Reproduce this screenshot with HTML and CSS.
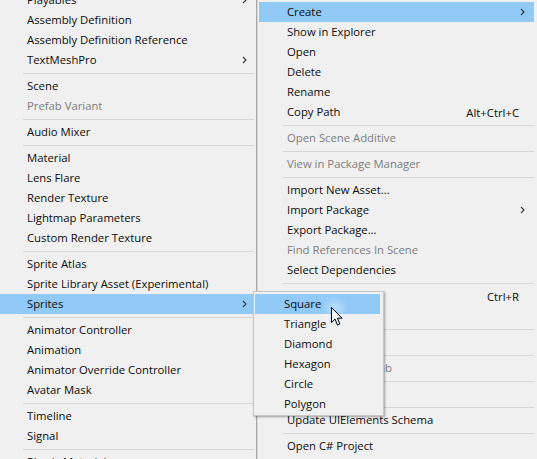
FILE: index.html
```html
<!DOCTYPE html>
<html>
<head>
<meta charset="utf-8">
<link rel="stylesheet" href="styles.css">
</head>
<body>
<div class="desk">
  <div class="menu menu-left">
    <div class="item"><span class="label">Playables</span><svg class="chev" viewBox="0 0 5 8"><polyline points="1,1 4,4 1,7"/></svg></div>
    <div class="item"><span class="label">Assembly Definition</span></div>
    <div class="item"><span class="label">Assembly Definition Reference</span></div>
    <div class="item"><span class="label">TextMeshPro</span><svg class="chev" viewBox="0 0 5 8"><polyline points="1,1 4,4 1,7"/></svg></div>
    <div class="sep"></div>
    <div class="item"><span class="label">Scene</span></div>
    <div class="item disabled"><span class="label">Prefab Variant</span></div>
    <div class="sep"></div>
    <div class="item"><span class="label">Audio Mixer</span></div>
    <div class="sep"></div>
    <div class="item"><span class="label">Material</span></div>
    <div class="item"><span class="label">Lens Flare</span></div>
    <div class="item"><span class="label">Render Texture</span></div>
    <div class="item"><span class="label">Lightmap Parameters</span></div>
    <div class="item"><span class="label">Custom Render Texture</span></div>
    <div class="sep"></div>
    <div class="item"><span class="label">Sprite Atlas</span></div>
    <div class="item"><span class="label">Sprite Library Asset (Experimental)</span></div>
    <div class="item active"><span class="label">Sprites</span><svg class="chev" viewBox="0 0 5 8"><polyline points="1,1 4,4 1,7"/></svg></div>
    <div class="sep"></div>
    <div class="item"><span class="label">Animator Controller</span></div>
    <div class="item"><span class="label">Animation</span></div>
    <div class="item"><span class="label">Animator Override Controller</span></div>
    <div class="item"><span class="label">Avatar Mask</span></div>
    <div class="sep"></div>
    <div class="item"><span class="label">Timeline</span></div>
    <div class="item"><span class="label">Signal</span></div>
    <div class="sep"></div>
    <div class="item"><span class="label">Physic Material</span></div>
  </div>
  <div class="menu menu-right">
    <div class="item active"><span class="label">Create</span><svg class="chev" viewBox="0 0 5 8"><polyline points="1,1 4,4 1,7"/></svg></div>
    <div class="item"><span class="label">Show in Explorer</span></div>
    <div class="item"><span class="label">Open</span></div>
    <div class="item"><span class="label">Delete</span></div>
    <div class="item"><span class="label">Rename</span></div>
    <div class="item"><span class="label">Copy Path</span><span class="key">Alt+Ctrl+C</span></div>
    <div class="sep"></div>
    <div class="item disabled"><span class="label">Open Scene Additive</span></div>
    <div class="sep"></div>
    <div class="item disabled"><span class="label">View in Package Manager</span></div>
    <div class="sep"></div>
    <div class="item"><span class="label">Import New Asset...</span></div>
    <div class="item"><span class="label">Import Package</span><svg class="chev" viewBox="0 0 5 8"><polyline points="1,1 4,4 1,7"/></svg></div>
    <div class="item"><span class="label">Export Package...</span></div>
    <div class="item disabled"><span class="label">Find References In Scene</span></div>
    <div class="item"><span class="label">Select Dependencies</span></div>
    <div class="sep"></div>
    <div class="item"><span class="label">Refresh</span><span class="key">Ctrl+R</span></div>
    <div class="item"><span class="label">Reimport</span></div>
    <div class="sep"></div>
    <div class="item"><span class="label">Reimport All</span></div>
    <div class="sep"></div>
    <div class="item disabled"><span class="label">Extract From Prefab</span></div>
    <div class="sep"></div>
    <div class="item"><span class="label">Run API Updater...</span></div>
    <div class="sep"></div>
    <div class="item"><span class="label">Update UIElements Schema</span></div>
    <div class="sep"></div>
    <div class="item"><span class="label">Open C# Project</span></div>
  </div>
  <div class="menu submenu">
    <div class="item active glow"><span class="label">Square</span></div>
    <div class="item"><span class="label">Triangle</span></div>
    <div class="item"><span class="label">Diamond</span></div>
    <div class="item"><span class="label">Hexagon</span></div>
    <div class="item"><span class="label">Circle</span></div>
    <div class="item"><span class="label">Polygon</span></div>
  </div>
  <svg class="cursor" viewBox="0 0 12 19" width="12" height="19">
    <path d="M0.5,0.5 L0.5,15.5 L4,12 L6.5,18 L8.8,17 L6.3,11.2 L11,11.2 Z" fill="#fff" stroke="#000" stroke-width="1" stroke-linejoin="miter"/>
  </svg>
</div>
</body>
</html>
```
FILE: styles.css
```css
html, body {
  margin: 0;
  padding: 0;
  background: #f0f0f0;
  overflow: hidden;
}
body {
  width: 537px;
  height: 459px;
  font-family: "Open Sans", "Noto Sans", "Liberation Sans", sans-serif;
  font-size: 11.3px;
  color: #0c0c0c;
}
.desk {
  position: relative;
  display: flex;
  height: 459px;
  overflow: hidden;
}
.menu {
  background: #f0f0f0;
  box-sizing: border-box;
}
.menu-left {
  width: 257px;
  flex: none;
  margin-top: -10px;
  border-right: 1px solid #a8a8a8;
  position: relative;
  z-index: 2;
}
.menu-right {
  flex: 1;
  border-left: 1px solid #d8d8d8;
  padding: 2px 3px 0 1px;
}
.item {
  height: 20px;
  display: flex;
  align-items: center;
  position: relative;
  white-space: nowrap;
}
.item.active {
  background: #91c9f7;
}
.item.disabled .label {
  color: #7d7d7d;
}
.label {
  line-height: 20px;
  padding-bottom: 1px;
}
.menu-left .item {
  padding-left: 27px;
}
.menu-right .item {
  padding-left: 28px;
}
.key {
  margin-left: auto;
  padding-right: 15px;
}
.chev {
  width: 5px;
  height: 8px;
  position: absolute;
  fill: none;
  stroke: #333;
  stroke-width: 1.1;
}
.menu-left .chev {
  left: 242px;
  top: 6px;
}
.menu-right .chev {
  right: 9px;
  top: 6px;
}
.sep {
  height: 6px;
  display: flex;
  align-items: center;
}
.sep::before {
  content: "";
  flex: 1;
  height: 1px;
  background: #d7d7d7;
}
.menu-left .sep {
  padding: 0 2px 0 23px;
}
.menu-right .sep {
  padding-left: 24px;
}
.submenu {
  position: absolute;
  left: 253px;
  top: 291px;
  width: 131px;
  height: 125px;
  border: 1px solid #c6c6c6;
  padding: 2px 3px 0 1px;
  box-shadow: 1px 1px 2px rgba(0, 0, 0, 0.35);
  z-index: 3;
}
.submenu .item {
  padding-left: 29px;
}
.submenu .item.glow {
  background: radial-gradient(ellipse 14px 12px at 80px 14px, #b9e0fd 0%, #a3d3fa 55%, rgba(145, 201, 247, 0) 100%), #91c9f7;
}
.cursor {
  position: absolute;
  left: 331px;
  top: 307px;
  z-index: 4;
  filter: drop-shadow(0 0 1px rgba(120, 180, 255, 0.5));
}
```
